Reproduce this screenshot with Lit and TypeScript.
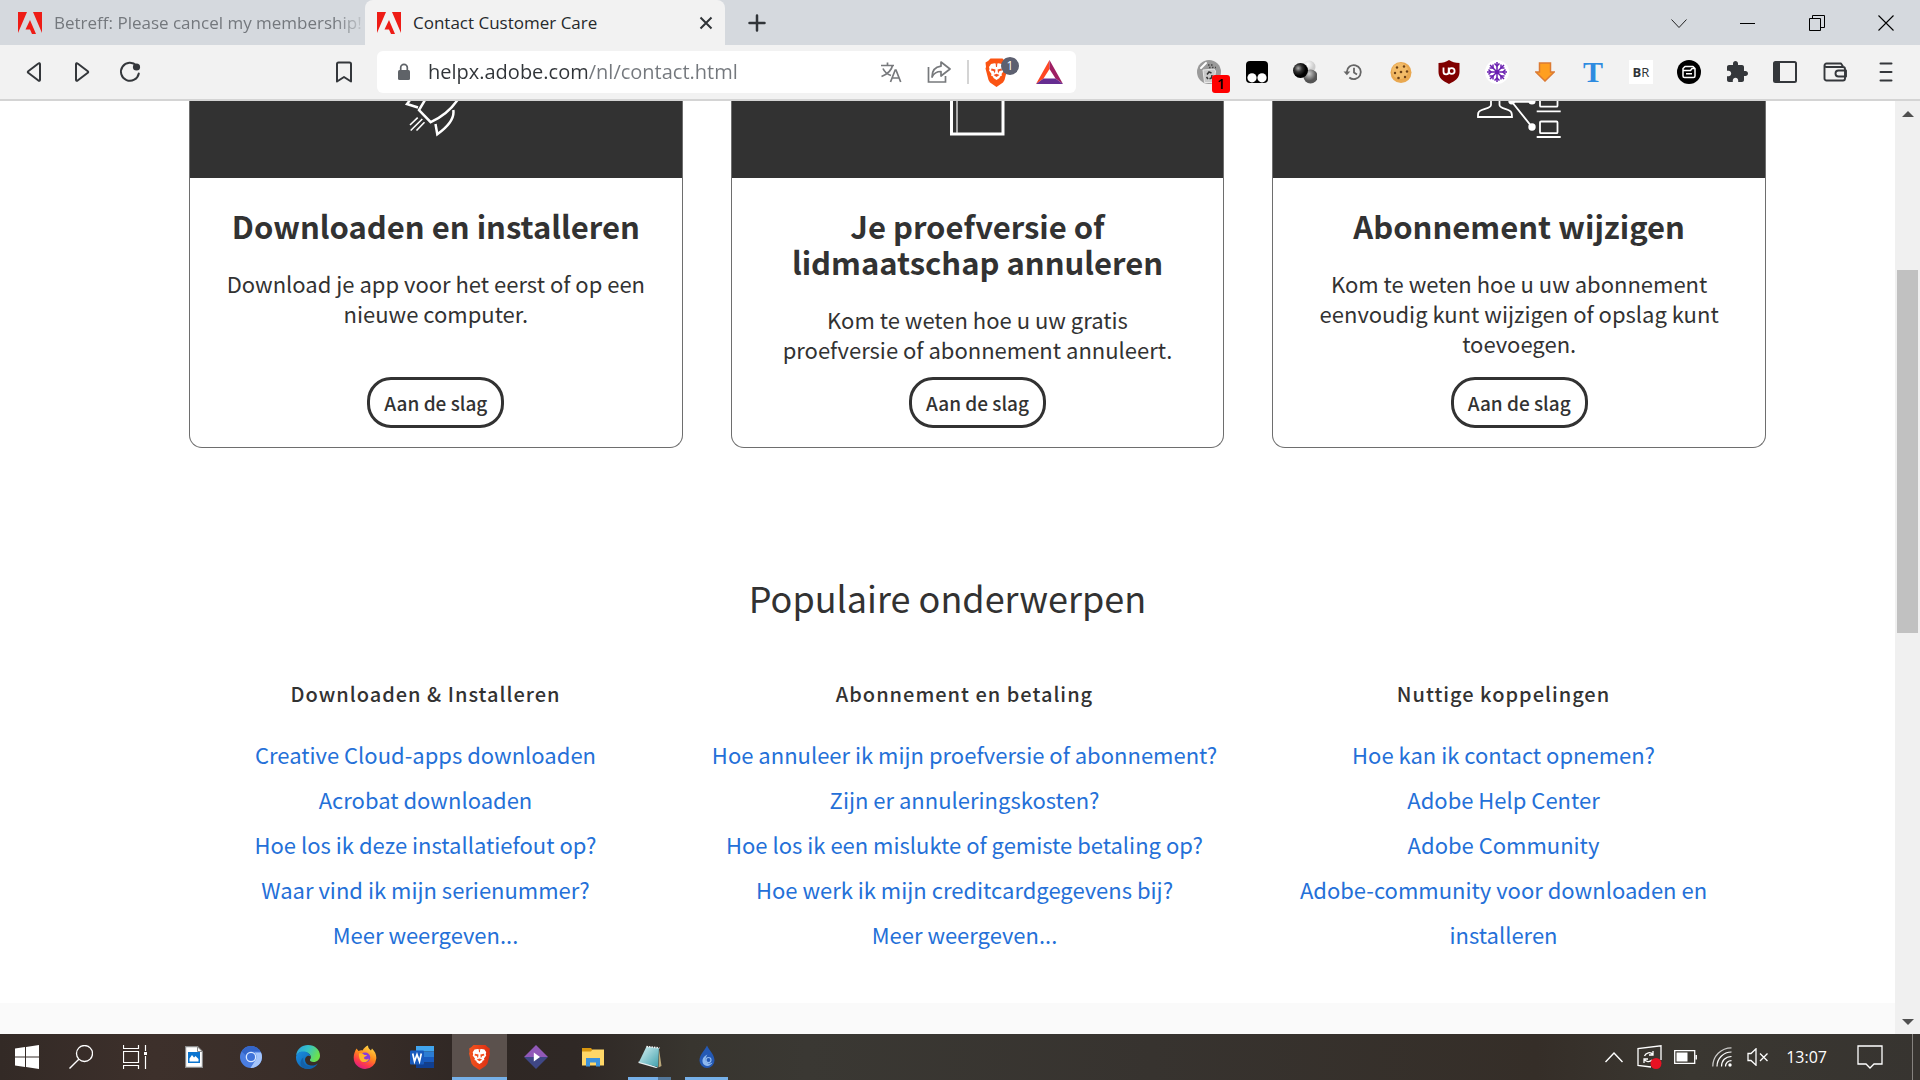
import { LitElement, html, svg, css, TemplateResult } from "lit";
import { customElement, property } from "lit/decorators.js";
import { classMap } from "lit/directives/class-map.js";

/* ---------- icons: every drawing uses one unit per CSS pixel ---------- */

const draw = (w: number, h: number, body: unknown) => html`<svg
  width=${w}
  height=${h}
  viewBox="0 0 ${w} ${h}"
  fill="none"
  aria-hidden="true"
>${body}</svg>`;

const lionFace = svg`
  <path fill="#fff" d="M7 6l3.500-.800L12.500 6l2-.800L18 6l2 3-.500 2 .500 1.500-2.500 3.500.500 1.500-2 1-.500 1.500L12.500 22l-3-2-.500-1.500-2-1 .500-1.500L5 12.500 5.500 11 5 9z"/>
  <path fill="#f4501e" d="M7.500 10.500l4 1-.600 4-1.400-2.500-2.500-.500zM17.500 10.500l-4 1 .600 4 1.400-2.500 2.500-.500zM9.500 17l3-1.200 3 1.200-3 2zM11.700 6h1.600l-.300 3h-1z"/>`;

const icons: Record<string, TemplateResult> = {
  adobe: draw(24, 22, svg`
    <path fill="#ee1c16" d="M0 0h9L0 21zM15 0h9v21zM12 8l6 14h-4l-2-4.500H7.500z"/>`),
  tabClose: draw(14, 14, svg`<path stroke="#303438" stroke-width="2" d="M1.500 1.500l11 11M12.500 1.500l-11 11"/>`),
  plus: draw(18, 18, svg`<path stroke="#303438" stroke-width="2.500" stroke-linecap="round" d="M9 1.500v15M1.500 9h15"/>`),
  chevron: draw(16, 16, svg`<path stroke="#222" d="M.500 4.500l7.500 8 7.500-8"/>`),
  minimize: draw(16, 16, svg`<path stroke="#000" d="M0 8.500h15"/>`),
  restore: draw(16, 16, svg`<path stroke="#000" d="M.500 3.500h11v12H.500zM3.500 3.500v-3h12v12h-4"/>`),
  close: draw(16, 16, svg`<path stroke="#000" stroke-width="1.100" d="M.500.500l15 15M15.500.500l-15 15"/>`),
  back: draw(20, 22, svg`<path stroke="#34373b" stroke-width="2" stroke-linejoin="round" d="M16 3.200v15.600c0 1-.900 1.300-1.600.700L4.200 11.800a1 1 0 0 1 0-1.600l10.200-7.700c.700-.600 1.600-.300 1.600.700z"/>`),
  forward: draw(20, 22, svg`<path stroke="#34373b" stroke-width="2" stroke-linejoin="round" d="M4 3.200v15.600c0 1 .900 1.300 1.600.700l10.200-7.700a1 1 0 0 0 0-1.600L5.600 2.500C4.900 1.900 4 2.200 4 3.200z"/>`),
  reload: draw(22, 22, svg`
    <path stroke="#34373b" stroke-width="2" stroke-linecap="round" d="M17.500 4.600A9 9 0 1 0 19.800 12.500"/>
    <circle cx="17.500" cy="6" r="3.600" fill="#34373b"/>`),
  bookmark: draw(18, 22, svg`<path stroke="#34373b" stroke-width="2" stroke-linejoin="round" d="M2 3a1.500 1.500 0 0 1 1.500-1.500h11A1.500 1.500 0 0 1 16 3v17.500l-7-4.500-7 4.500z"/>`),
  lock: draw(14, 18, svg`
    <rect x="1" y="7" width="12" height="10" rx="1.500" fill="#5f6368"/>
    <path stroke="#5f6368" stroke-width="1.700" d="M3.700 8V4.600a3.300 3.300 0 0 1 6.600 0V8"/>`),
  translate: draw(22, 22, svg`
    <g stroke="#77797c" stroke-width="1.700">
      <path d="M1 4.500h13M7.500 1.500v3M3 7.500c1.500 3.500 5 6 8 7M12.500 4.500C11.500 9.500 6.500 13.500 1.500 15.500"/>
      <path d="M10.500 21l4.700-12h.800l4.700 12M12 17h7"/>
    </g>`),
  share: draw(24, 24, svg`
    <g stroke="#77797c" stroke-width="1.700">
      <path d="M1.500 7v15h17v-6"/>
      <path stroke-linejoin="round" d="M14 2l9 7-9 7v-4.500c-4.500 0-7 1.500-9 5.500 0-6.500 3-10 9-10.800z"/>
    </g>`),
  shield: draw(25, 29, svg`
    <path fill="#fb5413" d="M6.500.500h12l2.500 2.500 2.500 1.500L23 9l.500 1.500L20.500 22 19 24.500 12.500 29 6 24.500 4.500 22 1.500 10.500 2 9l-.500-4.500L4 3z"/>
    <g>${lionFace}</g>`),
  prism: draw(27, 24, svg`
    <path fill="#ff4724" d="M13.500 0v9L7.500 18.500 0 24z"/>
    <path fill="#9e1f63" d="M13.500 0L27 24l-7.500-5.500-6-9.500z"/>
    <path fill="#662d91" d="M0 24l7.500-5.500h12L27 24z"/>`),
  recycle: draw(24, 24, svg`
    <circle cx="12" cy="12" r="12" fill="#9a9a9a"/>
    <path stroke="#fff" stroke-width="2" stroke-linecap="round" d="M4 8l5-5"/>
    <path fill="#c9c9c9" stroke="#e8e8e8" d="M6 10l11-1 1.500 2L17 22.500H7.500z"/>
    <path stroke="#333" stroke-width="1.500" d="M10 14.500l2-2.500 2.500 1M15 15l-.500 3-2 .800M9.500 17l1.500 2"/>
    <path stroke="#444" stroke-dasharray="1.500 1.500" stroke-width="1.500" d="M11 5h6M12 7.500h7"/>`),
  goggles: draw(24, 24, svg`
    <rect x="1" y="1" width="22" height="22" rx="4" fill="#000"/>
    <circle cx="7" cy="17.800" r="4.600" fill="#fff"/><circle cx="17" cy="17.800" r="4.600" fill="#fff"/>`),
  spheres: draw(24, 24, svg`
    <defs>
      <radialGradient id="sa" cx=".35" cy=".35"><stop offset="0" stop-color="#aaa"/><stop offset=".5" stop-color="#333"/><stop offset="1" stop-color="#000"/></radialGradient>
      <radialGradient id="sb" cx=".4" cy=".3"><stop offset="0" stop-color="#fff"/><stop offset="1" stop-color="#ccc"/></radialGradient>
      <radialGradient id="sc" cx=".4" cy=".3"><stop offset="0" stop-color="#ccc"/><stop offset="1" stop-color="#555"/></radialGradient>
    </defs>
    <circle cx="16" cy="7" r="6.500" fill="url(#sb)"/><circle cx="17.500" cy="16.500" r="7" fill="url(#sc)"/><circle cx="7.500" cy="10.500" r="7.500" fill="url(#sa)"/>`),
  history: draw(20, 18, svg`
    <path stroke="#666" stroke-width="1.800" d="M3.800 9a7 7 0 1 1 2.500 5.500M11 4.800V9.500l3 2"/>
    <path fill="#666" d="M.500 8.500h6.800L3.900 12.300z"/>`),
  cookie: draw(24, 24, svg`
    <circle cx="12" cy="12.500" r="10.500" fill="#e9a850"/><circle cx="11" cy="11" r="8" fill="#f2bb68"/>
    <g fill="#6b3f16"><circle cx="8" cy="7.500" r="1.200"/><circle cx="15" cy="6.500" r="1.200"/><circle cx="6" cy="13" r="1.200"/><circle cx="12" cy="12" r="1.300"/><circle cx="18" cy="11.500" r="1.200"/><circle cx="9.500" cy="18" r="1.300"/><circle cx="16" cy="17" r="1.200"/></g>`),
  ublock: draw(24, 24, svg`
    <path fill="#800000" d="M12 0c3 2 6 3 10.500 3v9c0 6-4.500 9-10.500 12C6 21 1.500 18 1.500 12V3C6 3 9 2 12 0z"/>
    <path stroke="#fff" stroke-width="1.800" d="M6.500 7.500v4.200a2.600 2.600 0 0 0 5.200 0V7.500"/>
    <circle cx="14.700" cy="11" r="2.900" stroke="#fff" stroke-width="1.800"/>`),
  snow: draw(24, 24, svg`
    <circle cx="12" cy="12" r="12" fill="#fff"/>
    <g stroke="#6a1fb0" stroke-width="1.500">
      <path d="M12 2v20M2 12h20M5 5l14 14M19 5L5 19"/>
      <path d="M9.500 3.500L12 6l2.500-2.500M9.500 20.500L12 18l2.500 2.500M3.500 9.500L6 12l-2.500 2.500M20.500 9.500L18 12l2.500 2.500M4.500 8h3.500V4.500M19.500 8H16V4.500M4.500 16H8v3.500M19.500 16H16v3.500"/>
    </g>`),
  download: draw(20, 20, svg`<path fill="#ff9f1f" stroke="#dc7b33" stroke-width="1.500" d="M4.500 1h11v9h3.700L10 19 .800 10h3.700z"/>`),
  disk: draw(24, 24, svg`
    <circle cx="12" cy="12" r="12" fill="#000"/>
    <path stroke="#fff" stroke-width="1.500" stroke-linejoin="round" d="M8 6.500h8l2 2V16a1.500 1.500 0 0 1-1.500 1.500h-9A1.500 1.500 0 0 1 6 16V8.500zM6.500 10.500h7l1.500-2h2.500M9 13.800h6"/>`),
  puzzle: draw(24, 24, svg`<path fill="#34373b" d="M20.500 11H19V7c0-1.100-.900-2-2-2h-4V3.500C13 2.120 11.880 1 10.500 1S8 2.120 8 3.500V5H4c-1.100 0-1.990.900-1.990 2v3.800H3.500c1.490 0 2.700 1.210 2.700 2.700s-1.210 2.700-2.700 2.700H2V20c0 1.100.900 2 2 2h3.800v-1.500c0-1.490 1.210-2.700 2.700-2.700s2.700 1.210 2.700 2.700V22H17c1.100 0 2-.900 2-2v-4h1.500c1.380 0 2.500-1.120 2.500-2.500S21.880 11 20.500 11z"/>`),
  sidebar: draw(24, 22, svg`
    <rect x="1" y="1" width="22" height="20" rx="1.500" stroke="#34373b" stroke-width="2"/><path fill="#34373b" d="M1 1h6v20H1z"/>`),
  wallet: draw(24, 20, svg`
    <g stroke="#34373b" stroke-width="1.900" stroke-linejoin="round">
      <path d="M1.500 3.500A2 2 0 0 1 3.500 1.500H18l2 3M1.500 3.500a2 2 0 0 0 2 1.500H20a2 2 0 0 1 2 2v9.500a2 2 0 0 1-2 2H3.500a2 2 0 0 1-2-2z"/>
      <path d="M23 8.500h-7.500a3 3 0 0 0 0 6H23z"/>
    </g>`),
  menu: draw(14, 20, svg`<path stroke="#34373b" stroke-width="2" stroke-linecap="round" d="M1.500 1.500h11M1.500 10h11M1.500 18.500h11"/>`),

  rocket: draw(120, 77, svg`
    <g stroke="#fff">
      <path stroke-width="2.500" d="M34-1l-3 4 11 3.500M49-1l-6 10 11.700 12.200C66 16 74 10 81.500-1M77.300 9c1.500 9-6 17-16 24.200L59.500 23"/>
      <path stroke-width="1.600" d="M41.700 16.700L34 24M46.300 18L34.700 29.500M48.500 21.300l-8 8.200"/>
    </g>`),
  book: draw(120, 77, svg`
    <path stroke="#fff" stroke-width="3" d="M34.500-2v35h51.500V-2"/><path stroke="#ddd" stroke-width="1.400" d="M40-2v34"/>`),
  network: draw(120, 77, svg`
    <g stroke="#fff" stroke-width="1.800">
      <path d="M32-2v6c0 4-11 3.500-12.500 7.500-.700 1.500-.500 3-.500 4.500h34c0-1.500 0-3-.700-4.500C51 7.500 40.500 8 40.500 4v-6"/>
      <path stroke-width="1.900" d="M52.700.700H73M53 1l20 25"/>
      <rect x="81" y="-6" width="17.500" height="11.700" rx="1"/><rect x="81" y="20.500" width="17.500" height="11.700" rx="1"/>
      <path d="M77.700 10.300h24M77.700 36h24"/>
    </g>
    <g fill="#fff"><circle cx="52.700" cy="0" r="3.400"/><circle cx="73" cy="0" r="3.600"/><circle cx="73" cy="26" r="3.700"/></g>`),

  windows: draw(24, 24, svg`<path fill="#fff" d="M0 3.500L10 2v9.500H0zM11 1.900L24 0v11.500H11zM0 12.500h10V22L0 20.500zM11 12.500h13V24l-13-1.900z"/>`),
  search: draw(24, 24, svg`<circle cx="15.500" cy="8.500" r="8" stroke="#fff" stroke-width="1.300"/><path stroke="#fff" stroke-width="1.400" d="M9.800 14.200L.500 23.500"/>`),
  taskview: draw(24, 24, svg`
    <path stroke="#fff" stroke-width="1.200" d="M.500 0v3.500h15V0M.500 24v-3.500h15V24M.500 6.500h15v11H.500zM22.500 0v6M22.500 11v13"/><path fill="#fff" d="M21 7h3v3h-3z"/>`),
  picture: draw(18, 22, svg`
    <path fill="#fff" stroke="#8b8b8b" stroke-width="1.200" d="M.600.600h12l4.800 4.800v16H.600z"/><path stroke="#8b8b8b" d="M12.500.500v5h5"/>
    <path fill="#0b74cf" d="M3 6h12v11H3z"/><path fill="#fff" d="M4.500 15.500v-3L7 9l2 2.500 1.500-1.500 3 3v2.500z"/>`),
  chromium: draw(24, 24, svg`
    <circle cx="12" cy="12" r="11" fill="#4a7de0"/><path fill="#3465c8" d="M2.500 6.500A11 11 0 0 1 21.500 6.500H12a5.500 5.500 0 0 0-5.200 3.800z"/>
    <path fill="#a5c5fb" d="M22 7.500A11 11 0 0 1 11.500 23l5.200-8.200A5.500 5.500 0 0 0 15.500 7.500z"/>
    <circle cx="12" cy="12" r="5.300" fill="#dce9ff"/><circle cx="12" cy="12" r="4" fill="#3f73da"/>`),
  edge: draw(24, 24, svg`
    <defs>
      <linearGradient id="ea" x1="0" y1="0" x2="1" y2=".4"><stop offset="0" stop-color="#2a9be0"/><stop offset=".5" stop-color="#35c1c8"/><stop offset="1" stop-color="#6be04e"/></linearGradient>
      <linearGradient id="eb" x1="0" y1="0" x2="1" y2="1"><stop offset="0" stop-color="#1a8de0"/><stop offset="1" stop-color="#0c59a4"/></linearGradient>
    </defs>
    <path fill="url(#ea)" d="M0 10.500C1 4 6 0 12 0c7 0 12 5 12 10.500 0 4-3 6.500-6.500 6.500-2.500 0-4-1-3.500-2.500 1-1 1.200-2.500.5-4C13 7.500 9 6.500 5.500 7 3 7.500 1 9 0 10.500z"/>
    <path fill="url(#eb)" d="M0 12.500C0 9 3 6.500 7 6.500c4 0 7 2 7.500 5-1-1-3.500-1-4.800 1-1.700 2.500 0 7.500 5 8 3 .4 5.500-.8 7-2C20 22 16 24 12 24 5 24 0 18.500 0 12.500z"/>
    <path fill="#1460a8" d="M7.500 12.500c-1.500 5 2.500 9.500 8.500 9.500-2.500 1.700-6 2.300-8.500 1-4-2-4-8 0-10.500z"/>`),
  firefox: draw(24, 24, svg`
    <defs>
      <linearGradient id="fa" x1=".8" y1="0" x2=".3" y2="1"><stop offset="0" stop-color="#ffe14a"/><stop offset=".45" stop-color="#ff8a1c"/><stop offset=".75" stop-color="#ff3a4a"/><stop offset="1" stop-color="#d81b8a"/></linearGradient>
    </defs>
    <path fill="url(#fa)" d="M3.500 3.500l2 2.500c1.500-.700 3-.800 4-.500C11 3 12.500 1.500 15 .500c0 2.500 1.500 3.500 3 5l1-2c3 3 4.500 6 4.300 10A11.300 11.300 0 0 1 12 24 11.300 11.300 0 0 1 .700 12.500C.700 9 2 6 3.500 3.500z"/>
    <circle cx="12.200" cy="12.500" r="5" fill="#8a3bd8"/>
    <path fill="#ffb52b" d="M6 8.500c2-.500 4 0 5.500 1.500H14c-.500 1.500-3 1.500-3 3s3 2 5 .500c-1 3-3.500 4-6 3.500C7 16.500 5.500 12 6 8.500z"/>`),
  word: draw(24, 22, svg`
    <path fill="#41a5ee" d="M6 0h18v5.500H6z"/><path fill="#2b7cd3" d="M6 5.500h18V11H6z"/><path fill="#185abd" d="M6 11h18v5.500H6z"/><path fill="#103f91" d="M6 16.500h18V22H6z"/>
    <rect y="4.500" width="14" height="14" rx="1" fill="#185abd"/>
    <path stroke="#fff" stroke-width="1.700" d="M2.700 7.500l1.800 8L7 8.500l2.500 7 1.800-8"/>`),
  brave: draw(25, 25, svg`
    <defs><linearGradient id="ba"><stop offset="0" stop-color="#f2541f"/><stop offset="1" stop-color="#dd2e12"/></linearGradient></defs>
    <path fill="url(#ba)" d="M6.500 0h12l2 2 2.300 1.500L22.500 7l.500 1.500-2.500 10L18.500 21l-6 4-6-4-2-2.500L2 8.500 2.500 7l-.300-3.500L4.500 2z"/>
    <g transform="translate(1.200 -.8) scale(.9)">${lionFace}</g>`),
  movies: draw(24, 24, svg`
    <path fill="#9159b8" d="M12 0l12 12H0z"/><path fill="#3f4785" d="M0 12h24L12 24z"/><path fill="#fff" d="M9.800 7.500l6.200 4.500-6.200 4.500z"/>`),
  explorer: draw(24, 20, svg`
    <path fill="#d9970f" d="M1 1h9l2 2.500-1 2H1z"/><path fill="#ffd767" d="M1 4.500h9l1.500-2H23V18.500H1z"/>
    <path fill="#3c92dc" d="M5 19.500V11h14v8.500h-4v-4H9v4z"/>`),
  notepad: draw(24, 24, svg`
    <defs><linearGradient id="na" x1="0" y1="0" x2="1" y2="1"><stop offset="0" stop-color="#d9f3f5"/><stop offset="1" stop-color="#3e9fab"/></linearGradient></defs>
    <path fill="#b9a77a" d="M21 4l2.500 17-3 1.500z"/><path fill="#e7eef0" d="M.500 16.500l6 1L20 22.500l-2 .500L.500 18z"/>
    <path fill="url(#na)" d="M8.500 1.500L21 3l-1 19L1 17z"/><path stroke="#f4f4f4" stroke-width="1.600" stroke-dasharray="1.500 1" d="M8.500 1.500L21.500 3"/>`),
  deluge: draw(24, 24, svg`
    <path fill="#2459b4" d="M12 .500c2 4.500 7.500 9 7.500 15a7.500 7.500 0 0 1-15 0c0-6 5.500-10.500 7.500-15z"/>
    <path fill="#8fb9ef" d="M17.500 17c-1 3.500-5 5-8 3-3.500-2.500-2.500-8.500 3-10.500-2.500 3-2.500 7 0 8.500 2 1 4 .500 5-1z"/>
    <circle cx="13.500" cy="15" r="2.500" stroke="#8fb9ef" stroke-width="1.200"/>`),

  up: draw(18, 11, svg`<path stroke="#fff" stroke-width="1.400" d="M.500 10L9 1l8.500 9"/>`),
  sync: draw(26, 24, svg`
    <path stroke="#fff" stroke-width="1.300" d="M14 22L1 20.500V3.500L24 .800V15"/>
    <path stroke="#fff" stroke-width="1.300" d="M7.500 11a5 5 0 0 1 8.500-1.500M16 6v4h-4M15 15a5 5 0 0 1-8-1M7 18v-4h4"/>
    <circle cx="19" cy="18.500" r="5.500" fill="#e81123"/>`),
  battery: draw(24, 14, svg`
    <path stroke="#fff" stroke-width="1.300" d="M.700.700h20v12.600H.700zM22.300 5v4.500"/><path fill="#fff" d="M2.500 2.500h11v9h-11z"/>`),
  wifi: draw(20, 20, svg`
    <g stroke="#fff" stroke-width="1.200"><path opacity=".75" d="M.800 19.500C.800 9 9 .800 19.500.800"/><path d="M5 19.500C5 11.500 11.500 5 19.500 5M9.500 19.500c0-6 4-10 10-10M13.500 19.500c0-3.500 2.500-5.800 6-5.800"/></g>
    <circle cx="18" cy="18" r="1.700" fill="#fff"/>`),
  mute: draw(22, 18, svg`<path stroke="#fff" stroke-width="1.300" d="M1 5.500h3L9 .800v16.400L4 12.500H1zM13 5.500l7.500 7.500M20.500 5.500L13 13"/>`),
  notice: draw(26, 24, svg`<path stroke="#fff" stroke-width="1.300" d="M1 1h24v18h-8l-4 4-4-4H1z"/>`),
};

/* ---------- browser chrome ---------- */

@customElement("tab-strip")
class TabStrip extends LitElement {
  static styles = css`
    :host { display: flex; height: 45px; background: #d5d9de; color: #303438; font: 17px/24px "Open Sans", sans-serif; }
    button { display: flex; align-items: center; justify-content: center; padding: 0; border: 0; background: none; font: inherit; color: inherit; }
    .tab { display: flex; align-items: center; gap: 12px; padding: 0 0 0 18px; flex: 0 1 365px; box-sizing: border-box; min-width: 0; }
    .tab.active { padding: 0 12px; flex-basis: 360px; background: #f2f2f2; border-radius: 8px 8px 0 0; }
    .title { flex: 1; justify-content: flex-start; min-width: 0; overflow: hidden; white-space: nowrap; color: #74787d; mask-image: linear-gradient(to right, #000 90%, rgba(0, 0, 0, 0.1)); }
    .active .title { color: #26292c; mask-image: none; }
    .new { width: 64px; }
    .controls { display: flex; margin-left: auto; }
    .controls button { width: 69px; }
    svg { flex: none; }
  `;
  render() {
    return html`
      <div class="tab">${icons.adobe}<button class="title">Betreff: Please cancel my membership!</button></div>
      <div class="tab active">
        ${icons.adobe}<button class="title">Contact Customer Care</button>
        <button aria-label="Close tab">${icons.tabClose}</button>
      </div>
      <button class="new" aria-label="New tab">${icons.plus}</button>
      <div class="controls">
        ${["chevron", "minimize", "restore", "close"].map((n) => html`<button aria-label=${n}>${icons[n]}</button>`)}
      </div>
    `;
  }
}

@customElement("tool-bar")
class ToolBar extends LitElement {
  static styles = css`
    :host { display: flex; align-items: center; height: 54px; padding: 0 9px 0 10px; background: #f2f2f2; border-bottom: 2px solid #d4d4d4; font-family: "Open Sans", sans-serif; }
    button { display: flex; align-items: center; justify-content: center; flex: none; width: 48px; height: 48px; padding: 0; border: 0; background: none; font: inherit; }
    .bookmark { margin: 0 9px 0 auto; }
    .left { display: flex; flex: 0 1 367px; }
    .address { display: flex; align-items: center; flex: 0 1 699px; min-width: 0; height: 42px; background: #fff; border-radius: 6px; box-sizing: border-box; padding: 0 0 0 20px; }
    input { flex: 1; min-width: 0; margin-left: 17px; padding: 0; border: 0; outline: 0; font: 20px/28px "Open Sans", sans-serif; color: transparent; background: linear-gradient(to right, #303438 159px, #74787d 159px); background-clip: text; -webkit-background-clip: text; }
    .divider { width: 2px; height: 24px; margin: 0 2px 0 4px; background: #d4d4d4; }
    .address .rewards { width: 54px; }
    .wide { width: 51px; }
    .badged { position: relative; }
    .count { position: absolute; left: 30px; top: 9px; width: 18px; height: 18px; border-radius: 9px; background: #5d6070; color: #fff; font-size: 12px; line-height: 18px; }
    .alert { position: absolute; left: 27px; top: 27px; width: 18px; height: 18px; border-radius: 3px; background: #f00; color: #000; font-size: 14px; font-weight: 600; line-height: 18px; }
    .extensions { display: flex; margin-left: auto; }
    .serif { color: #2e8be0; font: 700 30px/30px "Liberation Serif", serif; }
    .block { width: 24px; height: 24px; background: #fff; color: #303438; font-size: 13px; line-height: 24px; }
  `;
  render() {
    const ext = (n: string, wide = false) => html`<button class=${classMap({ wide })} aria-label=${n}>${icons[n]}</button>`;
    return html`
      <div class="left">
        ${["back", "forward", "reload"].map((n) => ext(n))}
        <button class="bookmark" aria-label="Bookmark">${icons.bookmark}</button>
      </div>
      <div class="address">
        ${icons.lock}
        <input aria-label="Address" .value=${"helpx.adobe.com/nl/contact.html"} />
        ${ext("translate")}${ext("share")}
        <span class="divider"></span>
        <button class="badged wide" aria-label="Shields">${icons.shield}<span class="count">1</span></button>
        <button class="rewards" aria-label="Rewards">${icons.prism}</button>
      </div>
      <div class="extensions">
        <button class="badged" aria-label="Recycle">${icons.recycle}<span class="alert">1</span></button>
        ${["goggles", "spheres", "history", "cookie", "ublock", "snow", "download"].map((n) => ext(n))}
        <button><span class="serif">T</span></button>
        <button><span class="block"><b>B</b>R</span></button>
        ${ext("disk")}${ext("puzzle")}${ext("sidebar")}${ext("wallet", true)}${ext("menu", true)}
      </div>
    `;
  }
}

/* ---------- help page ---------- */

@customElement("action-card")
class ActionCard extends LitElement {
  @property() icon = "";
  @property() heading = "";
  @property() text = "";
  static styles = css`
    :host { display: flex; flex-direction: column; border: 1px solid #6e6e6e; border-top: 0; border-radius: 0 0 13px 13px; overflow: hidden; background: #fff; text-align: center; color: #323232; }
    .head { display: flex; justify-content: center; background: #323232; }
    .body { display: flex; flex-direction: column; align-items: center; flex: 1; padding: 30px 36px 19px; }
    h3 { margin: 0 0 24px; font-size: 31px; line-height: 36px; font-weight: 700; }
    p { margin: 0 0 13px; font-size: 22px; line-height: 30px; }
    a { margin-top: auto; padding: 0 14px; border: 3px solid #323232; border-radius: 24px; font-size: 19px; line-height: 45px; font-weight: 500; color: inherit; text-decoration: none; }
  `;
  render() {
    return html`
      <div class="head">${icons[this.icon]}</div>
      <div class="body">
        <h3>${this.heading}</h3>
        <p>${this.text}</p>
        <a href="#">Aan de slag</a>
      </div>
    `;
  }
}

const cards = [
  { icon: "rocket", heading: "Downloaden en installeren", text: "Download je app voor het eerst of op een nieuwe computer." },
  { icon: "book", heading: "Je proefversie of lidmaatschap annuleren", text: "Kom te weten hoe u uw gratis proefversie of abonnement annuleert." },
  { icon: "network", heading: "Abonnement wijzigen", text: "Kom te weten hoe u uw abonnement eenvoudig kunt wijzigen of opslag kunt toevoegen." },
];

const topics = [
  { heading: "Downloaden & Installeren", links: ["Creative Cloud-apps downloaden", "Acrobat downloaden", "Hoe los ik deze installatiefout op?", "Waar vind ik mijn serienummer?", "Meer weergeven..."] },
  { heading: "Abonnement en betaling", links: ["Hoe annuleer ik mijn proefversie of abonnement?", "Zijn er annuleringskosten?", "Hoe los ik een mislukte of gemiste betaling op?", "Hoe werk ik mijn creditcardgegevens bij?", "Meer weergeven..."] },
  { heading: "Nuttige koppelingen", links: ["Hoe kan ik contact opnemen?", "Adobe Help Center", "Adobe Community", "Adobe-community voor downloaden en installeren"] },
];

@customElement("help-page")
class HelpPage extends LitElement {
  static styles = css`
    :host { display: flex; flex-direction: column; background: #fff; color: #323232; font-family: "Noto Sans CJK SC", "Noto Sans", sans-serif; text-align: center; }
    .cards { display: grid; grid-template-columns: repeat(3, 1fr); gap: 48px; padding: 0 129px 0 189px; }
    h2 { margin: 127px 0 63px; font-size: 36px; line-height: 44px; font-weight: 400; }
    .topics { display: grid; grid-template-columns: repeat(3, 1fr); gap: 28px; padding: 0 136px 46px 170px; }
    h4 { margin: 0 0 26px; font-size: 20px; line-height: 24px; font-weight: 500; letter-spacing: 1px; }
    ul { margin: 0; padding: 0; list-style: none; font-size: 22px; line-height: 45px; }
    a { color: #2470d8; text-decoration: none; }
    footer { flex: 1; background: #fafafa; }
  `;
  render() {
    return html`
      <div class="cards">
        ${cards.map((c) => html`<action-card .icon=${c.icon} .heading=${c.heading} .text=${c.text}></action-card>`)}
      </div>
      <h2>Populaire onderwerpen</h2>
      <div class="topics">
        ${topics.map((t) => html`<section>
          <h4>${t.heading}</h4>
          <ul>${t.links.map((l) => html`<li><a href="#">${l}</a></li>`)}</ul>
        </section>`)}
      </div>
      <footer></footer>
    `;
  }
}

@customElement("scroll-rail")
class ScrollRail extends LitElement {
  static styles = css`
    :host { display: grid; grid-template-rows: 25px 144fr 363fr 376fr 25px; width: 25px; flex: none; background: #f0f0f0; }
    .thumb { grid-row: 3; margin: 0 2px; background: #c1c1c1; }
    button { display: flex; align-items: center; justify-content: center; padding: 0; border: 0; background: none; }
    .down { grid-row: 5; }
  `;
  render() {
    return html`
      <button aria-label="Scroll up">${draw(12, 6, svg`<path fill="#505050" d="M6 0l6 6H0z"/>`)}</button>
      <div class="thumb"></div>
      <button class="down" aria-label="Scroll down">${draw(12, 6, svg`<path fill="#505050" d="M0 0h12L6 6z"/>`)}</button>
    `;
  }
}

/* ---------- taskbar ---------- */

@customElement("task-bar")
class TaskBar extends LitElement {
  static styles = css`
    :host { display: flex; height: 46px; flex: none; background: linear-gradient(to right, #332a26, #3d302b 8%, #382d28 18%, #2f2724 25%, #2f2825 30%, #38352f 36%, #3a3833 42%, #37332f 60%, #352e28 80%, #3a3731 88%, #373430); }
    button { display: flex; align-items: center; justify-content: center; width: 57px; padding: 0; border: 0; background: none; }
    .system { display: flex; margin-right: 3px; }
    .system button { width: 54px; }
    .apps { display: flex; }
    .running, .multi { margin: 0 7px; width: 43px; }
    .running { box-shadow: inset 0 -3px #76b0e8; }
    .multi { border-bottom: 3px solid; border-image: linear-gradient(to right, #76b0e8 68%, #54789a 68%) 1; padding-top: 3px; }
    .current { width: 55px; margin: 0 0 0 2px; background: #5b514d; box-shadow: inset 0 -3px #76b0e8; }
    .tray { display: flex; margin-left: auto; }
    .tray button { width: 36px; }
    .tray .clock { width: auto; padding: 0 18px 0 10px; color: #fff; font: 16px/24px "Open Sans", sans-serif; }
    .tray .notice { width: 50px; }
    .tray .desktop { width: 8px; margin-left: 17px; border-left: 1px solid #85827f; }
  `;
  render() {
    const state: Record<string, string> = { brave: "current", notepad: "multi", deluge: "running" };
    return html`
      <div class="system">${["windows", "search", "taskview"].map((n) => html`<button aria-label=${n}>${icons[n]}</button>`)}</div>
      <div class="apps">
        ${["picture", "chromium", "edge", "firefox", "word", "brave", "movies", "explorer", "notepad", "deluge"].map(
          (n) => html`<button class=${state[n] ?? ""} aria-label=${n}>${icons[n]}</button>`
        )}
      </div>
      <div class="tray">
        ${["up", "sync", "battery", "wifi", "mute"].map((n) => html`<button aria-label=${n}>${icons[n]}</button>`)}
        <button class="clock">13:07</button>
        <button class="notice" aria-label="Notifications">${icons.notice}</button>
        <button class="desktop" aria-label="Show desktop"></button>
      </div>
    `;
  }
}

@customElement("app-root")
class AppRoot extends LitElement {
  static styles = css`
    :host { display: flex; flex-direction: column; height: 100vh; overflow: hidden; }
    main { display: flex; flex: 1; min-height: 0; overflow: hidden; }
    help-page { flex: 1; min-width: 0; }
  `;
  render() {
    return html`
      <tab-strip></tab-strip>
      <tool-bar></tool-bar>
      <main><help-page></help-page><scroll-rail></scroll-rail></main>
      <task-bar></task-bar>
    `;
  }
}
